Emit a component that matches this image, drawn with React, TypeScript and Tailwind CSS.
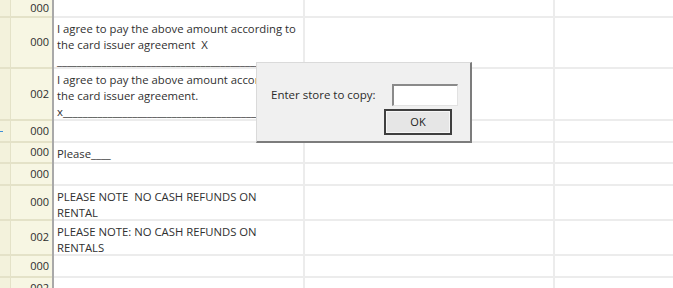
import React from "react";

type Row = { h: number; num: string; lines: string[] };

const rows: Row[] = [
  { h: 18, num: "000", lines: [] },
  {
    h: 51,
    num: "000",
    lines: [
      "I agree to pay the above amount according to",
      "the card issuer agreement  X",
      "________________________________________________",
    ],
  },
  {
    h: 52,
    num: "002",
    lines: [
      "I agree to pay the above amount according to",
      "the card issuer agreement.",
      "x_______________________________________________",
    ],
  },
  { h: 22, num: "000", lines: [] },
  { h: 21, num: "000", lines: ["Please____"] },
  { h: 22, num: "000", lines: [] },
  { h: 35, num: "000", lines: ["PLEASE NOTE  NO CASH REFUNDS ON", "RENTAL"] },
  { h: 35, num: "002", lines: ["PLEASE NOTE: NO CASH REFUNDS ON", "RENTALS"] },
  { h: 22, num: "000", lines: [] },
  { h: 22, num: "002", lines: [] },
];

const GridRow = ({ row }: { row: Row }) => (
  <div className="flex shrink-0" style={{ height: row.h }}>
    <div className="w-[11px] shrink-0 bg-[#f3f2dc] border-r border-b-2 border-[#e4e2c8]" />
    <div className="w-[41px] shrink-0 bg-[#f7f6e3] border-b-2 border-[#e4e2c8] flex items-center justify-end pr-[3px] text-[#2e2e2e] text-[11px]">
      {row.num}
    </div>
    <div className="w-[2px] shrink-0 bg-[#a9a9a9]" />
    <div className="w-[251px] shrink-0 bg-white border-r-2 border-b-2 border-[#ececec] pl-[3px] pt-[3px] text-[#303030] text-[11.3px] leading-[16px] overflow-hidden whitespace-pre">
      {row.lines.map((l, i) => (
        <div key={i}>{l}</div>
      ))}
    </div>
    <div className="w-[250px] shrink-0 bg-white border-r-2 border-b-2 border-[#ececec]" />
    <div className="flex-1 bg-white border-b-2 border-[#ececec]" />
  </div>
);

export default function App() {
  return (
    <div
      className="relative w-[673px] h-[288px] overflow-hidden bg-white"
      style={{ fontFamily: '"Open Sans", "Noto Sans", sans-serif' }}
    >
      <div className="flex flex-col">
        {rows.map((r, i) => (
          <GridRow key={i} row={r} />
        ))}
      </div>

      {/* row pointer tick */}
      <div className="absolute left-0 top-[131px] w-[3px] h-[1px] bg-[#3d8fd6]" />

      {/* copy dialog */}
      <div className="absolute left-[256px] top-[62px] w-[216px] h-[81px] bg-[#f0f0f0] border-l border-t border-[#dadada] border-r-2 border-b-2 border-r-[#7c7c7c] border-b-[#7c7c7c] pl-[14px] pt-[21px]">
        <div className="flex items-center">
          <span className="text-[#2b2b2b] text-[11.5px] w-[121px]">Enter store to copy:</span>
          <div className="w-[66px] h-[22px] bg-white border-t-2 border-l-2 border-[#8a8a8a] border-r border-b border-r-[#e2e2e2] border-b-[#e2e2e2]" />
        </div>
        <button className="mt-[3px] ml-[113px] w-[68px] h-[26px] bg-[#e6e6e6] border-2 border-[#3f3f3f] flex items-center justify-center text-[11px] text-[#222]">
          <span className="w-full h-full flex items-center justify-center border border-[#f6f6f6]">OK</span>
        </button>
      </div>
    </div>
  );
}
